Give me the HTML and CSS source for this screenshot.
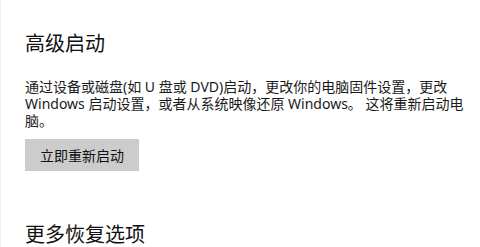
FILE: index.html
```html
<!DOCTYPE html>
<html lang="zh-CN">
<head>
<meta charset="utf-8">
<link rel="stylesheet" href="styles.css">
</head>
<body>
<main class="page">
  <section class="section">
    <h2 class="section-title">高级启动</h2>
    <p class="section-desc">通过设备或磁盘(如 U 盘或 DVD)启动，更改你的电脑固件设置，更改 Windows 启动设置，或者从系统映像还原 Windows。 这将重新启动电脑。</p>
    <button class="btn" type="button">立即重新启动</button>
  </section>
  <section class="section more">
    <h2 class="section-title">更多恢复选项</h2>
  </section>
</main>
</body>
</html>
```

FILE: styles.css
```css
html, body {
  margin: 0;
  padding: 0;
  background: #ffffff;
}
body {
  width: 480px;
  height: 247px;
  overflow: hidden;
  border-left: 1px solid #f3f3f3;
  box-sizing: border-box;
  font-family: "Noto Sans", "Noto Sans CJK SC", sans-serif;
  color: #1a1a1a;
}
.page {
  padding: 30px 0 0 24px;
  width: 452px;
}
.section {
  display: flex;
  flex-direction: column;
  align-items: flex-start;
}
.section-title {
  margin: 0;
  font-size: 20px;
  line-height: 28px;
  font-weight: 400;
  color: #111;
}
.section-desc {
  margin: 20px 0 0;
  font-size: 14px;
  line-height: 17px;
  color: #1a1a1a;
}
.btn {
  margin-top: 10px;
  height: 32px;
  padding: 0 15px;
  border: none;
  background: #cccccc;
  font-family: inherit;
  font-size: 14px;
  color: #111;
}
.more {
  margin-top: 50px;
}
```
